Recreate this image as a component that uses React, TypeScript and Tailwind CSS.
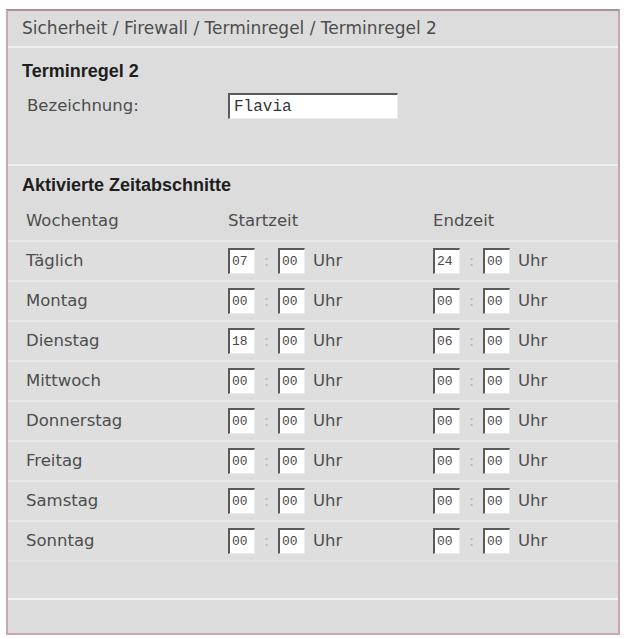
const rows = [
  { day: "Täglich", s: ["07", "00"], e: ["24", "00"] },
  { day: "Montag", s: ["00", "00"], e: ["00", "00"] },
  { day: "Dienstag", s: ["18", "00"], e: ["06", "00"] },
  { day: "Mittwoch", s: ["00", "00"], e: ["00", "00"] },
  { day: "Donnerstag", s: ["00", "00"], e: ["00", "00"] },
  { day: "Freitag", s: ["00", "00"], e: ["00", "00"] },
  { day: "Samstag", s: ["00", "00"], e: ["00", "00"] },
  { day: "Sonntag", s: ["00", "00"], e: ["00", "00"] },
];

function Box({ value }: { value: string }) {
  return (
    <div className="w-[27px] h-[26px] bg-white border-t-2 border-l-2 border-b border-r border-t-[#5a5a5a] border-l-[#5a5a5a] border-b-[#ececec] border-r-[#ececec] flex items-center pl-[2px] font-['Liberation_Mono',monospace] text-[13px] text-[#4a4a4a]">
      {value}
    </div>
  );
}

function Time({ v }: { v: string[] }) {
  return (
    <div className="flex items-center">
      <Box value={v[0]} />
      <span className="w-[23px] text-center text-[#b8b8b8]">:</span>
      <Box value={v[1]} />
      <span className="ml-[8px]">Uhr</span>
    </div>
  );
}

export default function App() {
  return (
    <div className="w-[626px] h-[639px] bg-white pt-[9px] px-[6px] font-['DejaVu_Sans',sans-serif] text-[16.5px] text-[#4d4d4d]">
      <div className="h-[626px] border-2 border-[#c9a5b6] border-t-[#a88e9a] bg-[#dcdcdc] flex flex-col">
        {/* breadcrumb */}
        <div className="h-[37px] flex items-center pl-[14px] border-b-2 border-[#efefef] text-[17px]">
          Sicherheit / Firewall / Terminregel / Terminregel 2
        </div>

        {/* Terminregel */}
        <div className="h-[118px] border-b-2 border-[#efefef] pt-[11px]">
          <div className="h-[24px] flex items-center pl-[14px] font-['Liberation_Sans',Arial,sans-serif] font-bold text-[18px] text-[#1e1e1e]">
            Terminregel 2
          </div>
          <div className="flex items-center pl-[19px] mt-[10px]">
            <span className="w-[201px]">Bezeichnung:</span>
            <div className="w-[170px] h-[26px] bg-white border-t-2 border-l-2 border-b border-r border-t-[#5a5a5a] border-l-[#5a5a5a] border-b-[#ececec] border-r-[#ececec] flex items-center pl-[4px] font-['Liberation_Mono',monospace] text-[16px] text-[#333]">
              Flavia
            </div>
          </div>
        </div>

        {/* Zeitabschnitte */}
        <div className="h-[36px] flex items-end pb-[3px] pl-[14px] font-['Liberation_Sans',Arial,sans-serif] font-bold text-[18px] text-[#1e1e1e]">
          Aktivierte Zeitabschnitte
        </div>
        <div className="h-[38px] flex items-center pl-[18px]">
          <span className="w-[202px]">Wochentag</span>
          <span className="w-[205px]">Startzeit</span>
          <span>Endzeit</span>
        </div>
        {rows.map((r) => (
          <div
            key={r.day}
            className="h-[40px] flex items-center pl-[18px] border-t-2 border-[#e9e9e9] bg-[#dedede]"
          >
            <span className="w-[202px]">{r.day}</span>
            <div className="w-[205px]">
              <Time v={r.s} />
            </div>
            <Time v={r.e} />
          </div>
        ))}
        <div className="h-[38px] border-t-2 border-[#e4e4e4]" />
        <div className="flex-1 border-t-2 border-[#f2f2f2]" />
      </div>
    </div>
  );
}
